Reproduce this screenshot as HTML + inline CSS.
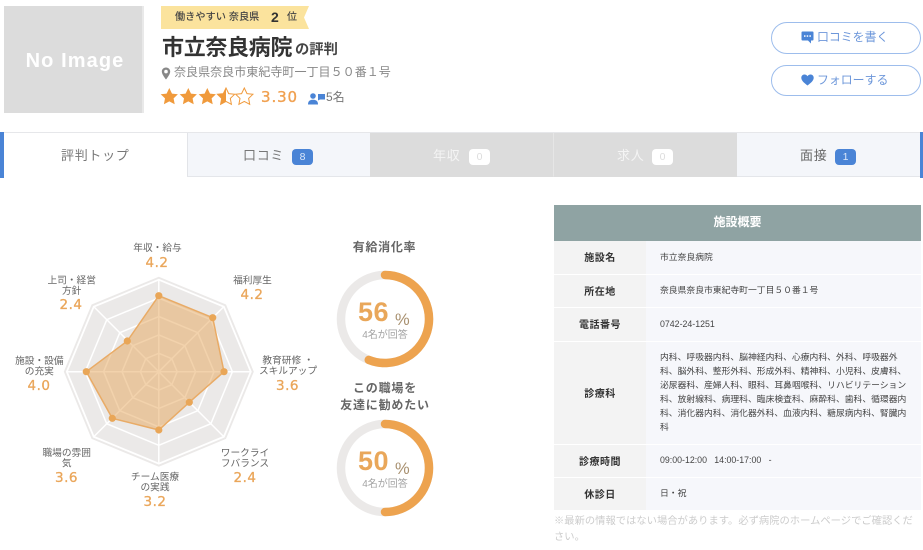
<!DOCTYPE html>
<html lang="ja"><head><meta charset="utf-8"><title>市立奈良病院の評判</title>
<style>
html,body{margin:0;padding:0;background:#fff}
body{position:relative;width:923px;height:550px;overflow:hidden;font-family:"Liberation Sans","Noto Sans CJK JP",sans-serif;color:#555}
#w{position:absolute;left:0;top:0;width:923px;height:550px;overflow:hidden;background:#fff;filter:blur(.35px)}
.a{position:absolute}
.t{position:absolute;white-space:nowrap;line-height:1}
.c{transform:translateX(-50%);text-align:center}
.tab{position:absolute;top:133px;height:44px;box-sizing:border-box;border-bottom:1px solid #e4e6ea}
.tl{position:absolute;top:149px;font-size:13px;letter-spacing:.7px;white-space:nowrap;line-height:1}
.bd{position:absolute;top:149px;width:21px;height:16px;border-radius:4px;font-size:10.500px;line-height:16px;text-align:center;background:#4a84d6;color:#dbe7fa}
.bd.o{background:#fff;color:#ddd}
.btn{position:absolute;left:771px;width:150px;box-sizing:border-box;border:1px solid #9dbdec;border-radius:16px;background:#fff}
.row{position:absolute;left:554px;width:367px;background:#f6f7fb}
.row b{position:absolute;left:0;top:-1px;bottom:1px;width:92px;font-size:10px;font-weight:700;color:#333;display:flex;align-items:center;justify-content:center;letter-spacing:.5px;z-index:1}
.row i{position:absolute;left:0;top:0;bottom:0;width:92px;background:#f3f3f3}
.row span{position:absolute;left:106px;top:50%;transform:translateY(calc(-50% - 1px));font-size:8.800px;line-height:14px;color:#444;white-space:nowrap}
</style></head><body><div id="w">

<div class="a" style="left:4px;top:6px;width:139px;height:107px;background:#dcdcdc"></div>
<div class="a" style="left:142px;top:6px;width:2px;height:107px;background:#e9e9e9"></div>
<div class="t c" style="left:75px;top:51px;font-size:20px;font-weight:700;color:#fff;letter-spacing:1.100px">No Image</div>

<svg class="a" style="left:161px;top:6px" width="150" height="23"><polygon points="0,0 148,0 143,11.500 148,23 0,23" fill="#fbe39d"/></svg>
<div class="t" style="left:175px;top:13px;font-size:10.200px;font-weight:500;color:#444">働きやすい 奈良県</div>
<div class="t" style="left:271px;top:10px;font-size:14px;font-weight:700;color:#333">2</div>
<div class="t" style="left:287px;top:13px;font-size:10px;font-weight:500;color:#444">位</div>

<div class="t" style="left:162px;top:37px;font-size:22px;font-weight:700;color:#333;letter-spacing:-.3px">市立奈良病院</div>
<div class="t" style="left:295px;top:43px;font-size:14.300px;font-weight:700;color:#444">の評判</div>

<svg class="a" style="left:161px;top:67px" width="10" height="13" viewBox="0 0 10 13"><path d="M5 .5C2.400.5.800 2.400.800 4.600.800 7.500 5 12.500 5 12.500S9.200 7.500 9.200 4.600C9.200 2.400 7.600.5 5 .5ZM5 6.400A1.800 1.800 0 1 1 5 2.800A1.800 1.800 0 0 1 5 6.400Z" fill="#888" fill-rule="evenodd"/></svg>
<div class="t" style="left:174px;top:66px;font-size:12.050px;color:#888">奈良県奈良市東紀寺町一丁目５０番１号</div>

<svg class="a" style="left:160px;top:86px" width="95" height="20" viewBox="0 0 95 20">
<defs><clipPath id="h"><rect x="57" y="0" width="9" height="20"/></clipPath>
<polygon id="s" points="0,-8.500 2.700,-2.900 8.600,-2.200 4.300,1.900 5.400,7.800 0,4.900 -5.400,7.800 -4.300,1.900 -8.600,-2.200 -2.700,-2.900"/></defs>
<use href="#s" x="9.300" y="10.500" fill="#f09a3c"/>
<use href="#s" x="28.300" y="10.500" fill="#f09a3c"/>
<use href="#s" x="47.300" y="10.500" fill="#f09a3c"/>
<use href="#s" x="66" y="10.500" fill="none" stroke="#f09a3c" stroke-width="1"/>
<g clip-path="url(#h)"><use href="#s" x="66" y="10.500" fill="#f09a3c"/></g>
<use href="#s" x="84.300" y="10.500" fill="none" stroke="#f09a3c" stroke-width="1"/>
</svg>
<div class="t" style="left:261px;top:90px;font-family:'DejaVu Sans',sans-serif;font-size:15px;color:#f0a050;letter-spacing:.9px;-webkit-text-stroke:.35px #f0a050">3.30</div>
<svg class="a" style="left:308px;top:92px" width="18" height="13" viewBox="0 0 18 13"><circle cx="5" cy="4" r="2.800" fill="#4a84d6"/><path d="M0 12.500C0 9 2 7.800 5 7.800S10 9 10 12.500Z" fill="#4a84d6"/><path d="M10 2H17V7.500H12L10 8.500Z" fill="#4a84d6"/></svg>
<div class="t" style="left:326px;top:91px;font-size:12px;color:#777">5名</div>

<div class="btn" style="top:22px;height:32px"></div>
<svg class="a" style="left:801px;top:31px" width="13" height="13" viewBox="0 0 13 13"><path d="M1.500.5H11.500A1 1 0 0 1 12.500 1.500V8.500A1 1 0 0 1 11.500 9.500H10V12.500L7 9.500H1.500A1 1 0 0 1 .5 8.500V1.500A1 1 0 0 1 1.500.5Z" fill="#4a84d6"/><rect x="3" y="4.300" width="1.500" height="1.500" fill="#fff"/><rect x="5.700" y="4.300" width="1.500" height="1.500" fill="#fff"/><rect x="8.400" y="4.300" width="1.500" height="1.500" fill="#fff"/></svg>
<div class="t" style="left:817px;top:32px;font-size:11.900px;color:#6d97da">口コミを書く</div>

<div class="btn" style="top:65px;height:31px"></div>
<svg class="a" style="left:801px;top:74px" width="13" height="12" viewBox="0 0 13 12"><path d="M6.500 11.500C4 9.300.3 7 .3 3.700.3 1.800 1.800.5 3.500.5 4.800.5 5.900 1.200 6.500 2.300 7.100 1.200 8.200.5 9.500.5 11.200.5 12.700 1.800 12.700 3.700 12.700 7 9 9.300 6.500 11.500Z" fill="#4a84d6"/></svg>
<div class="t" style="left:817px;top:75px;font-size:11.900px;color:#6d97da">フォローする</div>

<div class="a" style="left:0;top:132px;width:923px;height:1px;background:#e6e7ea"></div>
<div class="a" style="left:0;top:132px;width:4px;height:46px;background:#4a84d6"></div>
<div class="a" style="left:919.500px;top:132px;width:3.500px;height:46px;background:#4a84d6"></div>
<div class="tab" style="left:4px;width:183px;background:#fff;border-bottom:0;height:45px"></div>
<div class="tab" style="left:187px;width:183px;background:#f4f6fa;border-left:1px solid #e2e4e8"></div>
<div class="tab" style="left:370px;width:184px;background:#dcdcdc;border-bottom-color:#dcdcdc;border-right:1px solid #e6e6e6"></div>
<div class="tab" style="left:554px;width:183px;background:#dcdcdc;border-bottom-color:#dcdcdc"></div>
<div class="tab" style="left:737px;width:182.500px;background:#f4f6fa"></div>
<div class="tl" style="left:61px;color:#777">評判トップ</div>
<div class="tl" style="left:243px;color:#777">口コミ</div><div class="bd" style="left:292px">8</div>
<div class="tl" style="left:433px;color:#f4f4f4">年収</div><div class="bd o" style="left:469px">0</div>
<div class="tl" style="left:617px;color:#f4f4f4">求人</div><div class="bd o" style="left:652px">0</div>
<div class="tl" style="left:800px;color:#666">面接</div><div class="bd" style="left:835px">1</div>

<svg class="a" style="left:0;top:230px" width="330" height="290" viewBox="0 230 330 290">
<g transform="translate(158.800 371.700)">
<polygon points="0,-95 67.200,-67.200 95,0 67.200,67.200 0,95 -67.200,67.200 -95,0 -67.200,-67.200" fill="#ebe9e8"/>
<g fill="none" stroke="#fff" stroke-width="1.500">
<polygon points="0,-92 65.050,-65.050 92,0 65.050,65.050 0,92 -65.050,65.050 -92,0 -65.050,-65.050" stroke-width="1.800"/>
<polygon points="0,-73.600 52.040,-52.040 73.600,0 52.040,52.040 0,73.600 -52.040,52.040 -73.600,0 -52.040,-52.040"/>
<polygon points="0,-55.200 39.030,-39.030 55.200,0 39.030,39.030 0,55.200 -39.030,39.030 -55.200,0 -39.030,-39.030"/>
<polygon points="0,-36.800 26.020,-26.020 36.800,0 26.020,26.020 0,36.800 -26.020,26.020 -36.800,0 -26.020,-26.020"/>
<polygon points="0,-18.400 13.010,-13.010 18.400,0 13.010,13.010 0,18.400 -13.010,13.010 -18.400,0 -13.010,-13.010"/>
<path d="M0 -92V92M-92 0H92M-65.050 -65.050L65.050 65.050M65.050 -65.050L-65.050 65.050"/>
</g>
<polygon points="0,-76 53.900,-54 65.200,0 30.500,30.600 0,58.300 -46.500,46.600 -72.500,0 -31.500,-30.700" fill="#e6a55a" fill-opacity=".5" stroke="#e9ab66" stroke-width="1.500"/>
<g fill="#e9a657"><circle cx="0" cy="-76" r="3.600"/><circle cx="53.900" cy="-54" r="3.600"/><circle cx="65.200" cy="0" r="3.600"/><circle cx="30.500" cy="30.600" r="3.600"/><circle cx="0" cy="58.300" r="3.600"/><circle cx="-46.500" cy="46.600" r="3.600"/><circle cx="-72.500" cy="0" r="3.600"/><circle cx="-31.500" cy="-30.700" r="3.600"/></g>
</g>
<g font-size="9.700" fill="#666" text-anchor="middle">
<text x="157.500" y="250.800">年収・給与</text>
<text x="252.500" y="283.500">福利厚生</text>
<text x="288" y="363.500">教育研修 ・</text><text x="288" y="374.200">スキルアップ</text>
<text x="245" y="456.200">ワークライ</text><text x="245" y="466.500">フバランス</text>
<text x="155" y="480.200">チーム医療</text><text x="155" y="490.500">の実践</text>
<text x="66.700" y="456.200">職場の雰囲</text><text x="66.700" y="466.500">気</text>
<text x="39.300" y="364.200">施設・設備</text><text x="39.300" y="374.500">の充実</text>
<text x="71.700" y="283.500">上司・経営</text><text x="71.700" y="293.800">方針</text>
</g>
<g font-family="DejaVu Sans,sans-serif" font-size="13.500" fill="#eaa65a" stroke="#eaa65a" stroke-width=".3" text-anchor="middle" letter-spacing=".5">
<text x="157" y="267">4.2</text><text x="252" y="299">4.2</text><text x="287.500" y="390">3.6</text><text x="245" y="482">2.4</text><text x="155" y="506">3.2</text><text x="66.500" y="482">3.6</text><text x="39" y="390">4.0</text><text x="71" y="309">2.4</text>
</g>
</svg>

<div class="t c" style="left:384.500px;top:241px;font-size:12px;font-weight:700;color:#666;letter-spacing:.7px">有給消化率</div>
<svg class="a" style="left:330px;top:260px" width="110" height="265" viewBox="330 260 110 265">
<circle cx="385" cy="319" r="44" fill="none" stroke="#ebe9e8" stroke-width="8.500"/>
<path d="M385 275A44 44 0 1 1 368.800 359.900" fill="none" stroke="#eda34f" stroke-width="8.500" stroke-linecap="round"/>
<circle cx="385" cy="468" r="44" fill="none" stroke="#ebe9e8" stroke-width="8.500"/>
<path d="M385 424A44 44 0 0 1 385 512" fill="none" stroke="#eda34f" stroke-width="8.500" stroke-linecap="round"/>
</svg>
<div class="t" style="left:358px;top:299px;font-size:27px;font-weight:700;color:#e9a75a;letter-spacing:.5px">56</div>
<div class="t" style="left:395px;top:312px;font-size:16.500px;color:#a8906f">%</div>
<div class="t c" style="left:385px;top:331px;font-size:10px;color:#a3a3a3">4名が回答</div>
<div class="t c" style="left:385px;top:381.500px;font-size:12px;font-weight:700;color:#666;letter-spacing:.8px">この職場を</div>
<div class="t c" style="left:385px;top:399px;font-size:12px;font-weight:700;color:#666;letter-spacing:.8px">友達に勧めたい</div>
<div class="t" style="left:358px;top:448px;font-size:27px;font-weight:700;color:#e9a75a;letter-spacing:.5px">50</div>
<div class="t" style="left:395px;top:461px;font-size:16.500px;color:#a8906f">%</div>
<div class="t c" style="left:385px;top:480px;font-size:10px;color:#a3a3a3">4名が回答</div>

<div class="a" style="left:554px;top:205px;width:367px;height:36px;background:#8fa3a3;color:#fff;font-size:12px;font-weight:700;text-align:center;line-height:34px">施設概要</div>
<div class="row" style="top:241px;height:33px"><i></i><b>施設名</b><span>市立奈良病院</span></div>
<div class="row" style="top:275px;height:32px"><i></i><b>所在地</b><span>奈良県奈良市東紀寺町一丁目５０番１号</span></div>
<div class="row" style="top:308px;height:33px"><i></i><b>電話番号</b><span>0742-24-1251</span></div>
<div class="row" style="top:342px;height:102px"><i></i><b>診療科</b><span>内科、呼吸器内科、脳神経内科、心療内科、外科、呼吸器外<br>科、脳外科、整形外科、形成外科、精神科、小児科、皮膚科、<br>泌尿器科、産婦人科、眼科、耳鼻咽喉科、リハビリテーション<br>科、放射線科、病理科、臨床検査科、麻酔科、歯科、循環器内<br>科、消化器内科、消化器外科、血液内科、糖尿病内科、腎臓内<br>科</span></div>
<div class="row" style="top:445px;height:32px"><i></i><b>診療時間</b><span>09:00-12:00 &nbsp; 14:00-17:00 &nbsp; -</span></div>
<div class="row" style="top:478px;height:32px"><i></i><b>休診日</b><span>日・祝</span></div>
<div class="t" style="left:554px;top:517px;font-size:10.300px;color:#ccc">※最新の情報ではない場合があります。必ず病院のホームページでご確認くだ</div>
<div class="t" style="left:554px;top:532.500px;font-size:10.300px;color:#ccc">さい。</div>
</div></body></html>
